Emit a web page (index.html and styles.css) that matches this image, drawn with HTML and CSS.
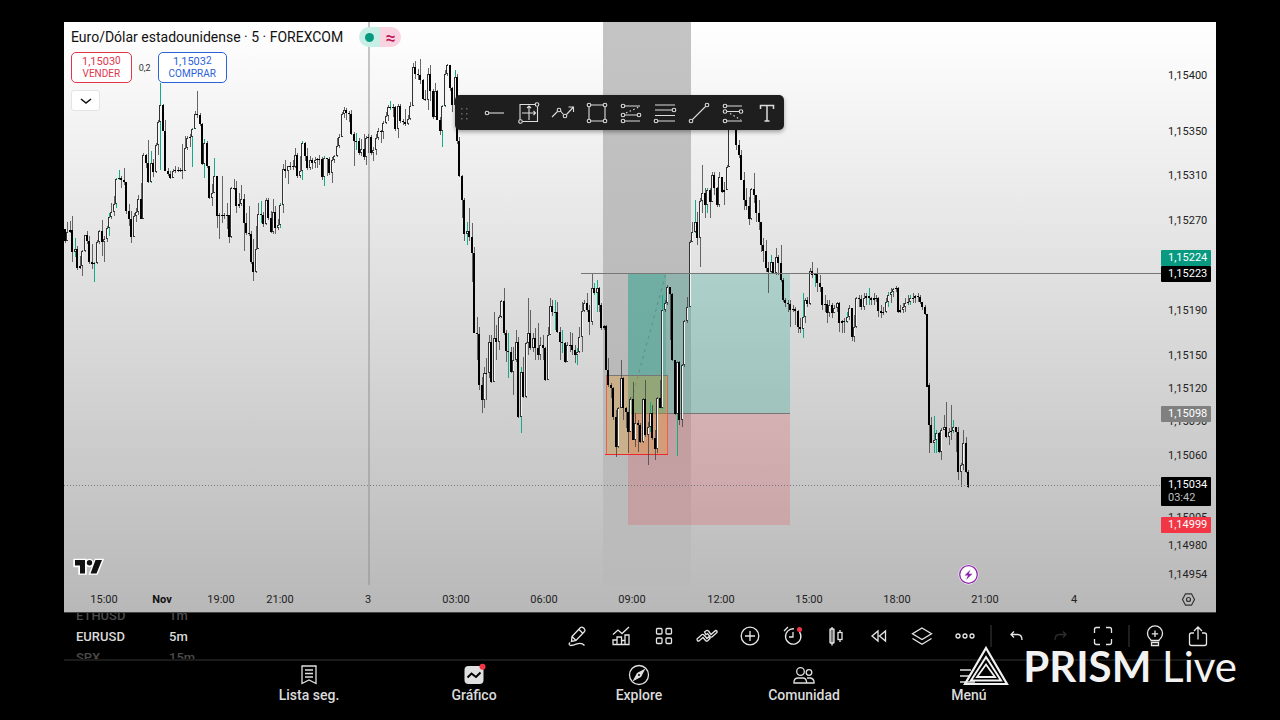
FILE: index.html
```html
<!DOCTYPE html>
<html lang="es">
<head>
    <meta charset="UTF-8">
    <meta name="viewport" content="width=device-width, initial-scale=1.0">
    <title>EURUSD 5m - Gráfico</title>
    <link rel="stylesheet" href="styles.css">
</head>
<body>
    <div class="app">
        <main class="chart">
            <svg class="chart-canvas" viewBox="64 22 1152 590" role="img" aria-label="Euro/Dólar estadounidense, 5 minutos">
                <defs>
                    <linearGradient id="session-fill" x1="0" y1="0" x2="0" y2="1">
                        <stop offset="0" stop-color="#b0b0b0" stop-opacity=".75"/>
                        <stop offset=".7" stop-color="#b0b0b0" stop-opacity=".75"/>
                        <stop offset="1" stop-color="#b4b4b4" stop-opacity=".3"/>
                    </linearGradient>
                </defs>

                <!-- session band and day separator -->
                <rect x="603" y="22" width="88" height="563" fill="url(#session-fill)"/>
                <rect class="day-line" x="368" y="22" width="2" height="563"/>

                <!-- long position -->
                <rect class="profit" x="628" y="273" width="162" height="140"/>
                <rect class="profit-done" x="628" y="273" width="38" height="140"/>
                <rect class="loss" x="628" y="413" width="162" height="112"/>
                <path class="thin-line" d="M628 413.500H790"/>
                <path class="trail" d="M628 413L666 273"/>

                <!-- range box -->
                <rect class="range" x="606" y="376" width="62" height="79"/>
                <path class="range-side" d="M606.500 376V455M667.500 376V455"/>
                <path class="range-top" d="M606 375.500H668"/>
                <path class="range-bottom" d="M605 454.500H668"/>

                <g id="candles"></g>

                <path class="thin-line" d="M581 273.500H1161"/>
                <path class="last-line" d="M64 485.500H1161"/>

                <g id="prices" class="axis"></g>
                <g id="times" class="axis times"></g>

                <g class="tags">
                    <rect x="1161" y="250" width="50" height="16" rx="1" fill="#089981"/>
                    <text x="1168" y="261">1,15224</text>
                    <rect x="1161" y="266" width="50" height="16" rx="1" fill="#000"/>
                    <text x="1168" y="277">1,15223</text>
                    <rect x="1161" y="406" width="50" height="16" rx="1" fill="#808080"/>
                    <text x="1168" y="417">1,15098</text>
                    <rect x="1161" y="477" width="50" height="29" rx="1" fill="#000"/>
                    <text x="1168" y="488">1,15034</text>
                    <text x="1168" y="501" fill-opacity=".75">03:42</text>
                    <rect x="1161" y="517" width="50" height="16" rx="1" fill="#f23645"/>
                    <text x="1168" y="528">1,14999</text>
                </g>

                <!-- event marker -->
                <circle cx="968.500" cy="574.500" r="10" fill="#fff"/>
                <circle cx="968.500" cy="574.500" r="8.800" fill="#fff" stroke="#8e24aa" stroke-width="1.300"/>
                <path d="M970.500 569.500L964.500 575.500H968L966 580L972.500 573.800H968.800Z" fill="#8e24aa"/>

                <!-- axis settings -->
                <path d="M1185.500 593.800H1191.500L1194.500 599.500L1191.500 605.200H1185.500L1182.500 599.500Z" fill="none" stroke="#333" stroke-width="1.200"/>
                <circle cx="1188.500" cy="599.500" r="2" fill="none" stroke="#333" stroke-width="1.200"/>

                <!-- logo -->
                <g stroke="#fff" stroke-width="3.500" stroke-linejoin="miter" fill="#fff">
                    <path d="M75 560.500H85V573H80V565.500H75ZM91 573H96.500L101.500 560.500H96Z"/>
                    <circle cx="89.500" cy="563" r="2.600"/>
                </g>
                <path d="M75 560H85V573.500H80V565.500H75ZM90.500 573.500H96.500L102 560H95.500Z" fill="#111"/>
                <circle cx="89.500" cy="562.800" r="2.700" fill="#111"/>
            </svg>

            <div class="legend">
                <div class="legend-row">
                    <h1>Euro/Dólar estadounidense · 5 · FOREXCOM</h1>
                    <span class="status"><i class="status-open"></i><i class="status-delay">≈</i></span>
                </div>
                <div class="trade-row">
                    <button class="trade sell"><span>1,1503<sup>0</sup></span><small>VENDER</small></button>
                    <span class="spread">0,2</span>
                    <button class="trade buy"><span>1,1503<sup>2</sup></span><small>COMPRAR</small></button>
                </div>
                <button class="collapse" aria-label="Ocultar">
                    <svg width="12" height="8" viewBox="0 0 12 8"><path d="M1 2L6 6L11 2" stroke="#111" stroke-width="1.600" fill="none"/></svg>
                </button>
            </div>

            <div class="drawing-bar">
                <span class="grip"><svg width="10" height="14" viewBox="0 0 10 14" fill="#666"><path d="M1 1h1.500v1.500H1zM6 1h1.500v1.500H6zM1 6h1.500v1.500H1zM6 6h1.500v1.500H6zM1 11h1.500v1.500H1zM6 11h1.500v1.500H6z"/></svg></span>
                <button aria-label="Rayo horizontal"><svg viewBox="0 0 24 24"><circle cx="4" cy="12" r="1.800"/><path d="M6 12H21"/></svg></button>
                <button aria-label="Rango"><svg viewBox="0 0 24 24"><path d="M3 18.500V3.500H18.500M20.500 5.500V20.500H5.500M12 5V19M5 12H18.500M10 7L12 5L14 7M16.500 10L18.500 12L16.500 14M3 3.500V19"/><circle cx="20" cy="3.500" r="1.800"/><circle cx="3.500" cy="20.500" r="1.800"/></svg></button>
                <button aria-label="Trayectoria"><svg viewBox="0 0 24 24"><path d="M1 16L6.500 10.500M9.500 10L12.500 13.500M15.500 13.500L22.500 6M17.500 6H22.500V11"/><circle cx="8" cy="9" r="1.800"/><circle cx="14" cy="15" r="1.800"/></svg></button>
                <button aria-label="Rectángulo"><svg viewBox="0 0 24 24"><path d="M6 4H18M6 20H18M4 6V18M20 6V18"/><circle cx="4" cy="4" r="1.800"/><circle cx="20" cy="4" r="1.800"/><circle cx="4" cy="20" r="1.800"/><circle cx="20" cy="20" r="1.800"/></svg></button>
                <button aria-label="Posición larga"><svg viewBox="0 0 24 24"><path d="M6 5H21M6 14H18M6 20H21"/><path d="M7 12L20 6" stroke-dasharray="1.500 2.500"/><circle cx="4" cy="5" r="1.800"/><circle cx="4" cy="14" r="1.800"/><circle cx="20" cy="14" r="1.800"/><circle cx="4" cy="20" r="1.800"/></svg></button>
                <button aria-label="Retroceso"><svg viewBox="0 0 24 24"><path d="M2 4H22M2 9H19M2 14.500H22M5 20H22"/><circle cx="21" cy="9" r="1.800"/><circle cx="3" cy="20" r="1.800"/></svg></button>
                <button aria-label="Línea de tendencia"><svg viewBox="0 0 24 24"><path d="M5.500 18.500L18.500 5.500"/><circle cx="4" cy="20" r="1.800"/><circle cx="20" cy="4" r="1.800"/></svg></button>
                <button aria-label="Posición corta"><svg viewBox="0 0 24 24"><path d="M6 5H21M6 10.500H18M6 20H21"/><path d="M9 12.500L20 19" stroke-dasharray="1.500 2.500"/><circle cx="4" cy="5" r="1.800"/><circle cx="4" cy="10.500" r="1.800"/><circle cx="20" cy="10.500" r="1.800"/><circle cx="4" cy="20" r="1.800"/></svg></button>
                <button aria-label="Texto"><svg viewBox="0 0 24 24"><path d="M5.500 8V4.500H18.500V8M12 4.500V20M9.500 20H14.500" stroke-width="1.500"/></svg></button>
            </div>
        </main>

        <section class="toolbar">
            <div class="wheel symbol-wheel">
                <span>ETHUSD</span>
                <span class="active">EURUSD</span>
                <span>SPX</span>
            </div>
            <div class="wheel">
                <span>1m</span>
                <span class="active">5m</span>
                <span>15m</span>
            </div>
            <div class="tools">
                <button aria-label="Dibujar"><svg viewBox="0 0 24 24"><path d="M6 12.500L14.500 3.500Q16 2.500 17.500 4L18.500 5Q19.500 6.500 18.500 7.500L10 16.500L5.500 17.500ZM13 5.500L16.500 9M6 12.500L10 16.500M4 18.500Q2 20.500 4.500 21.500Q7 21.500 11 19.800Q16 18.500 18.500 21.500"/></svg></button>
                <button aria-label="Indicadores"><svg viewBox="0 0 24 24"><path d="M4 10.500L9 6L13 9.500L20 3"/><path d="M4 20.500V16H8V20.500M8 17V13H12.500V20.500M12.500 16.500H16V20.500M16 20.500V11H20V20.500H3.500"/></svg></button>
                <button aria-label="Diseño"><svg viewBox="0 0 24 24"><rect x="4.500" y="4.500" width="5.500" height="5.500" rx="1"/><rect x="14" y="4.500" width="5.500" height="5.500" rx="1"/><rect x="4.500" y="14" width="5.500" height="5.500" rx="1"/><rect x="14" y="14" width="5.500" height="5.500" rx="1"/></svg></button>
                <button aria-label="Comparar"><svg viewBox="0 0 24 24"><path d="M2 15L7 10.500Q8 10 9 11L12 14.500L13.500 13L15 14.500L12.500 17Q11.500 17.500 10.500 16.500L8 13.500L4 17Q2 17.500 2 15ZM9.500 8L11.500 6.500Q12.500 6 13.500 7L16 10.500L20.500 6.500Q22.500 6.500 22 8.500L17 13Q16 13.500 15 12.500L12.500 9.500L11 10.500Z"/></svg></button>
                <button aria-label="Añadir"><svg viewBox="0 0 24 24"><circle cx="12" cy="12" r="8.800"/><path d="M12 7V17M7 12H17"/></svg></button>
                <button aria-label="Alertas"><svg viewBox="0 0 24 24"><path d="M18.500 8A7.700 7.700 0 1 1 13 4.800M12 8V13H8M3 7L7 3"/><circle class="dot" cx="18.500" cy="5.500" r="2.500"/></svg></button>
                <button aria-label="Velas"><svg viewBox="0 0 24 24"><path d="M8 3V5M8 19V21.500M16 6V8.500M16 15.500V18"/><rect x="6" y="5" width="4" height="14" rx=".5" fill="#777"/><rect x="14" y="8.500" width="4" height="7"/></svg></button>
                <button aria-label="Repetición"><svg viewBox="0 0 24 24"><path d="M11 7V17L5 12ZM18.500 7V17L12.500 12Z"/></svg></button>
                <button aria-label="Objetos"><svg viewBox="0 0 24 24"><path d="M12 4L21.500 9.800L12 15.500L2.500 9.800ZM2.500 14.500L12 20.300L21.500 14.500"/></svg></button>
                <button aria-label="Más"><svg viewBox="0 0 24 24"><circle cx="5" cy="12" r="2"/><circle cx="12" cy="12" r="2"/><circle cx="19" cy="12" r="2"/></svg></button>
                <i class="divider"></i>
                <button aria-label="Deshacer"><svg viewBox="0 0 24 24"><path d="M9 7.500L6 10.500L9 13.500M6.500 10.500H12.500Q17 10.500 17 16"/></svg></button>
                <button class="off" aria-label="Rehacer" disabled><svg viewBox="0 0 24 24"><path d="M15 7.500L18 10.500L15 13.500M17.500 10.500H11.500Q7 10.500 7 16"/></svg></button>
                <button aria-label="Pantalla completa"><svg viewBox="0 0 24 24"><path d="M3.500 9V5.500Q3.500 3.500 5.500 3.500H9M15 3.500H18.500Q20.500 3.500 20.500 5.500V9M20.500 15V18.500Q20.500 20.500 18.500 20.500H15M9 20.500H5.500Q3.500 20.500 3.500 18.500V15"/></svg></button>
                <i class="divider"></i>
                <button aria-label="Publicar idea"><svg viewBox="0 0 24 24"><path d="M8 16.500Q8 15.500 6.500 14.500A7.500 7.500 0 1 1 17.500 14.500Q16 15.500 16 16.500ZM8.500 18.500H15.500V21.500H8.500ZM12 6.500V13M8.800 9.800H15.200"/></svg></button>
                <button aria-label="Compartir"><svg viewBox="0 0 24 24"><path d="M8 9H5.500Q3.500 9 3.500 11V19.500Q3.500 21.500 5.500 21.500H18.500Q20.500 21.500 20.500 19.500V11Q20.500 9 18.500 9H16M12 15.500V3.500M8 7L12 3L16 7"/></svg></button>
            </div>
        </section>

        <nav class="nav">
            <a href="#lista">
                <svg viewBox="0 0 24 24"><path d="M5 3H19V20.500L12 17L5 20.500ZM8 7H16M8 10.500H16M8 14H16"/></svg>
                Lista seg.
            </a>
            <a href="#grafico" class="current">
                <svg viewBox="0 0 24 24"><rect x="2.500" y="3" width="19" height="18" rx="4" fill="#e0e0e0" stroke="none"/><path d="M5.500 14.500L9.500 10.500L14 14L18.500 9.500" stroke="#000" stroke-width="2"/><circle class="dot" cx="20.500" cy="3.800" r="3"/></svg>
                Gráfico
            </a>
            <a href="#explore">
                <svg viewBox="0 0 24 24"><circle cx="12" cy="12" r="9.500"/><path d="M17 7L13.500 13.500L7 17L10.500 10.500Z" fill="#e0e0e0"/><circle cx="12" cy="12" r="1" fill="#000" stroke="none"/></svg>
                Explore
            </a>
            <a href="#comunidad">
                <svg viewBox="0 0 24 24"><circle cx="8.500" cy="8.500" r="3.800"/><circle cx="17" cy="9.500" r="2.800"/><path d="M2 20V18.500Q2.500 15 6 15H11Q14 15 14.500 18.500V20ZM15 15H18.500Q21.500 15.500 22 18.500V20H14.500"/></svg>
                Comunidad
            </a>
            <a href="#menu">
                <svg viewBox="0 0 24 24"><path d="M3 7H14M3 13H12M3 19H18"/></svg>
                Menú
            </a>
        </nav>
    </div>

    <div class="watermark">
        <svg width="46" height="40" viewBox="0 0 46 40" fill="none" stroke="#f2f2f2">
            <path d="M23 2L44 38H2Z" stroke-width="2.200"/>
            <path d="M23 11L38 34.500H8Z" stroke-width="2"/>
            <path d="M23 18.500L32 31H14Z" stroke-width="1.800"/>
        </svg>
        <span><b>PRISM</b> Live</span>
    </div>

    <script src="chart.js"></script>
</body>
</html>
```
FILE: styles.css
```css
* {
    box-sizing: border-box;
}
body {
    margin: 0;
    padding: 22px 5% 0;
    background: #000;
    color: #dbdbdb;
    font-family: Roboto, 'Liberation Sans', sans-serif;
}
button {
    font-family: inherit;
    padding: 0;
    border: 0;
    background: none;
    cursor: pointer;
}

/* chart */
.chart {
    position: relative;
    background: linear-gradient(#ffffff, #b8b8b8);
}
.chart-canvas {
    display: block;
    width: 100%;
}
.day-line {
    fill: #909090;
    fill-opacity: 0.5;
}
#candles {
    shape-rendering: crispEdges;
}
.wick {
    stroke: #444;
    stroke-opacity: 0.8;
    fill: none;
}
.wick-green {
    stroke: #12ad88;
    fill: none;
}
.body-down {
    fill: #000;
}
.body-up {
    fill: #f4f4f4;
}
.body-edge {
    fill: #333;
}
.profit {
    fill: #089981;
    fill-opacity: 0.24;
}
.profit-done {
    fill: #089981;
    fill-opacity: 0.24;
}
.loss {
    fill: #f23645;
    fill-opacity: 0.2;
}
.thin-line {
    stroke: #777;
}
.trail {
    stroke: #555;
    stroke-opacity: 0.5;
    stroke-dasharray: 3 4;
    stroke-width: 0.8;
}
.range {
    fill: #ff9800;
    fill-opacity: 0.25;
}
.range-side {
    stroke: #f44336;
    stroke-opacity: 0.7;
}
.range-top {
    stroke: #777;
}
.range-bottom {
    stroke: #f0282d;
}
.last-line {
    stroke: #777;
    stroke-dasharray: 1 2;
}
.axis {
    fill: #222;
    font-size: 11px;
}
.times {
    text-anchor: middle;
}
.times .month {
    font-weight: bold;
    fill: #111;
}
.tags {
    fill: #fff;
    font-size: 11px;
}

/* legend over the chart */
.legend {
    position: absolute;
    top: 5px;
    left: 7px;
}
.legend-row {
    display: flex;
    align-items: center;
    gap: 16px;
    height: 20px;
}
.legend h1 {
    margin: 0;
    font-size: 14px;
    font-weight: 400;
    color: #111;
}
.status {
    display: flex;
    height: 20px;
    border-radius: 10px;
    overflow: hidden;
}
.status i {
    display: flex;
    align-items: center;
    justify-content: center;
    width: 21px;
    font-style: normal;
}
.status-open {
    background: #c8efe6;
}
.status-open::before {
    content: "";
    width: 9px;
    height: 9px;
    border-radius: 50%;
    background: #089981;
}
.status-delay {
    background: #f9d3df;
    color: #c2185b;
    font-size: 18px;
    font-weight: 500;
}
.trade-row {
    display: flex;
    align-items: center;
    gap: 7px;
    margin: 5px 0 7px;
}
.trade {
    display: flex;
    flex-direction: column;
    align-items: center;
    justify-content: center;
    height: 31px;
    padding: 0 10px;
    border: 1px solid;
    border-radius: 5px;
    background: #fff;
    font-size: 11px;
    line-height: 12px;
}
.trade sup {
    font-size: 10px;
    line-height: 0;
    vertical-align: 1px;
}
.trade small {
    font-size: 10px;
}
.sell {
    color: #e0364c;
}
.buy {
    color: #2a62d8;
}
.spread {
    font-size: 9px;
    color: #333;
}
.collapse {
    display: flex;
    align-items: center;
    justify-content: center;
    width: 29px;
    height: 21px;
    border: 1px solid #e4e4e4;
    border-radius: 3px;
    background: #fff;
}

/* floating drawing tools */
.drawing-bar {
    position: absolute;
    top: 73px;
    left: 391px;
    display: flex;
    align-items: center;
    height: 35px;
    padding-left: 5px;
    border-radius: 5px;
    background: #1e1e1e;
    box-shadow: 0 2px 4px rgba(0,0,0,0.35);
}
.grip {
    width: 18px;
    height: 14px;
}
.drawing-bar button {
    width: 34px;
    height: 35px;
}
.drawing-bar button svg {
    display: block;
    width: 24px;
    height: 24px;
    margin: 0 auto;
    fill: none;
    stroke: #dcdcdc;
    stroke-width: 1.1;
}

/* symbol wheel and tools */
.toolbar {
    display: flex;
    height: 49px;
    padding-left: 12px;
    border-top: 1px solid #444;
    border-bottom: 2px solid #1a1a1a;
}
.wheel {
    display: flex;
    flex-direction: column;
    justify-content: center;
    overflow: hidden;
    font-size: 13px;
    font-weight: 500;
    line-height: 21px;
    color: #4a4a4a;
}
.symbol-wheel {
    width: 93px;
}
.wheel .active {
    color: #dbdbdb;
}
.tools {
    display: flex;
    align-items: center;
    gap: 7px;
    margin-left: auto;
}
.tools button {
    width: 36px;
    height: 40px;
}
.tools svg {
    display: block;
    width: 24px;
    height: 24px;
    margin: 0 auto;
    fill: none;
    stroke: #e6e6e6;
    stroke-width: 1.3;
}
.tools .off {
    opacity: 0.2;
}
.divider {
    width: 2px;
    height: 22px;
    background: #1e1e1e;
}
.tools .dot,
.nav .dot {
    fill: #f23645;
    stroke: none;
}

/* bottom navigation */
.nav {
    display: flex;
    justify-content: center;
    padding: 2px 2px 0 0;
}
.nav a {
    display: flex;
    flex-direction: column;
    align-items: center;
    flex: 0 0 165px;
    color: #dbdbdb;
    font-size: 14px;
    font-weight: 500;
    line-height: 16px;
    text-decoration: none;
}
.nav svg {
    width: 24px;
    height: 24px;
    fill: none;
    stroke: #e0e0e0;
    stroke-width: 1.3;
}

/* stream watermark */
.watermark {
    position: absolute;
    right: 43px;
    bottom: 26px;
    display: flex;
    align-items: center;
    gap: 14px;
    color: #f2f2f2;
    font-family: Lato, sans-serif;
    font-size: 42px;
    line-height: 56px;
}
```
FILE: chart.js
```javascript
const SVG = 'http://www.w3.org/2000/svg';
const STEP = 2.447;

// each bar is [high, low, close, green wick?], opening at the previous close
const segments = [
    { x: 65, open: 229, bars: [
        [229,243,241],[222,240,232],[221,233,230],[216,262,252],[238,257,249,1],[246,270,268],[256,269,266],[250,276,251],
        [235,252,235],[231,244,241],[236,264,262],[244,269,264],[262,282,263,1],[240,264,242],[230,244,231],[220,256,242],
        [236,262,239],[226,242,228],[213,236,217,1],[203,219,212],[196,216,204],[178,208,179,1],[170,180,178,1],[176,188,180],
        [168,185,182],[182,214,211],[204,226,219],[211,243,237],[213,234,216],[208,222,212],[195,215,199],[183,219,219],
        [153,219,155],[154,168,163],[140,183,182],[151,183,163,1],[159,177,172],[143,173,145],[120,155,122],[83,170,105,1],
        [104,130,131],[120,170,171],[168,176,174],[171,179,178],[169,178,171],[166,173,170],[167,172,170],[168,172,170],
        [144,179,171],[136,171,148],[136,150,138],[134,147,137],[128,167,129,1],[111,129,114],[91,118,115],[113,126,124],
        [123,165,164],[139,178,143,1],[141,168,166],[168,199,198],[184,206,193],[158,193,176,1],[176,228,216],[213,239,215],
        [176,223,215],[213,219,215],[203,229,215],[215,243,237],[187,238,188],[179,190,188],[181,213,206],[193,208,204],
        [185,206,199],[194,251,223],[213,235,233],[206,236,234],[231,264,262],[239,281,272],[226,273,249],[203,249,214],
        [201,223,215,1],[212,227,224],[198,225,200],[198,220,218],[211,233,232],[199,234,212],[206,234,228],[219,230,225],
        [203,228,205,1],[164,213,169],[160,178,171],[166,184,166],[162,170,166],[160,170,167],[148,168,155],[153,178,176],
        [156,178,171],[141,180,143,1],[142,161,156],[148,170,168],[156,170,160],[158,169,163],[157,168,160],[158,168,159],
        [155,165,159],[157,180,177],[156,186,158,1],[158,176,159],[157,175,173],[157,183,160],[155,163,156],[138,157,146],
        [134,148,137],[112,137,114],[107,118,110],[108,120,113],[111,122,114],[110,135,134],[132,166,141],[133,150,141,1],
        [138,155,153],[139,156,149],[134,160,157],[136,165,138],[134,153,137],[135,155,153],[147,161,150],[134,155,138],
        [128,140,131],[130,143,132],[121,139,123],[112,124,116],[105,121,107],[101,110,107,1],[104,117,107],[106,131,129],
        [104,138,106],[104,123,121],[119,125,122],[109,126,124],[115,125,119],[102,120,106]
    ]},
    { x: 413, open: 106, bars: [
        [63,106,67],[61,79,74],[69,80,75],[59,84,80],[79,100,99],[90,101,100],[68,110,74],[65,101,91],
        [89,119,117],[83,103,91],[90,120,120],[117,135,131],[105,147,106,1],[70,107,74],[64,76,65],[65,91,88],
        [87,112,105],[70,118,77,1],[74,144,141],[137,177,176],[175,218,200],[198,241,234],[222,245,231,1],[208,241,237],
        [223,282,253],[247,333,333],[317,360,334],[327,390,385],[377,413,400],[367,408,373],[358,400,373],[335,378,342],
        [335,383,382],[312,377,338],[325,360,342],[315,350,317],[300,318,301],[288,335,333],[330,362,351],[333,378,352,1],
        [347,373,372],[347,395,360],[330,362,342],[337,418,417],[367,433,372,1],[357,398,397],[342,398,343],[298,355,333],
        [310,350,348],[333,352,338],[328,360,348],[323,360,355],[337,360,345],[335,360,348],[347,381,380],[327,380,335],
        [298,335,306],[300,316,312],[300,330,312,1],[302,333,332],[327,360,342],[330,353,343,1],[342,363,362],[342,362,345],
        [332,352,345],[333,355,350],[345,363,355],[348,365,352,1],[327,353,337],[302,352,311],[300,312,303],[293,312,310],
        [305,335,322],[273,325,288],[283,295,293,1],[280,312,288,1],[287,312,305],[303,330,328],[325,330,326]
    ]},
    { x: 606, open: 326, bars: [
        [325,370,370],[358,387,385],[383,398,388],[387,420,417],[410,457,447],[407,448,408],[360,408,378],[377,420,408],
        [407,428,412],[412,453,432],[397,432,399],[382,440,440],[413,447,423],[420,452,425],[423,443,442],[398,443,399],
        [380,437,435],[422,465,427],[402,432,413,1],[405,440,438],[430,460,449],[397,453,398],[380,408,408],[295,409,310,1],
        [300,312,303],[285,305,287],[287,340,294],[293,361,360],[361,415,414],[361,456,362,1],[361,425,420],[364,427,365],
        [320,367,321],[297,323,307]
    ]},
    { x: 690, open: 307, bars: [
        [240,307,242],[222,242,232],[200,233,222,1],[212,245,238],[198,267,201],[165,213,193],[188,218,205],[188,213,190,1],
        [188,218,202],[172,202,175],[172,195,188],[187,207,205],[172,207,177],[177,193,192],[182,205,190],[165,190,167],
        [122,167,124],[110,130,118],[112,130,125],[126,150,145],[140,158,155],[150,180,180],[172,210,200],[188,210,206],
        [197,225,219],[188,220,189],[173,203,195],[195,222,213],[200,230,222],[222,252,245],[238,262,251],[240,272,268],
        [262,293,272],[255,273,262,1],[262,274,273],[248,275,257],[255,275,263],[245,282,280],[278,302,300],[298,307,303],
        [300,312,304],[300,327,310],[305,312,309],[307,325,311],[310,333,327],[318,333,329],[293,338,317,1],[298,323,300],
        [297,307,304],[268,305,271],[262,278,275],[273,287,274,1],[268,292,283],[275,292,287],[287,310,305],[295,312,304],
        [300,323,313],[300,317,305],[303,318,313],[305,313,308],[302,312,303],[302,332,323],[320,333,321],[318,333,322],
        [312,323,317,1],[305,320,308],[308,341,337],[315,342,327],[297,328,298],[295,307,299],[295,310,307],[293,310,298],
        [293,305,296],[288,305,298,1],[297,305,300],[293,305,298],[295,302,298],[297,317,311],[305,318,313],[307,315,312],
        [298,313,302],[292,307,295,1],[288,303,292],[288,297,289],[286,292,288],[287,313,312],[305,313,310],[303,313,307],
        [298,312,303],[295,305,302],[295,305,298,1],[293,303,298],[295,303,296],[293,302,297],[295,304,302],[302,310,307],
        [305,315,314],[314,387,387]
    ]},
    { x: 929, open: 385, bars: [
        [383,453,425],[417,443,443],[416,453,440,1],[430,453,433,1],[432,453,452],[428,460,430],[415,430,427],[402,438,437],
        [428,445,432],[405,440,431],[420,433,427,1],[427,452,432],[427,480,472],[463,487,465],[430,470,443],[437,473,472],
        [470,488,487]
    ]}
];

const prices = {
    '1,15400': 75, '1,15350': 131, '1,15310': 175, '1,15270': 220, '1,15190': 310, '1,15150': 355,
    '1,15120': 388, '1,15090': 421, '1,15060': 455, '1,15005': 517, '1,14980': 545, '1,14954': 574
};

const times = [
    ['15:00', 104], ['Nov', 162], ['19:00', 221], ['21:00', 280], ['3', 368], ['03:00', 456], ['06:00', 544],
    ['09:00', 632], ['12:00', 721], ['15:00', 809], ['18:00', 897], ['21:00', 985], ['4', 1074]
];

function add(parent, name, attrs, text) {
    const el = document.createElementNS(SVG, name);
    for (const key in attrs) {
        el.setAttribute(key, attrs[key]);
    }
    if (text) {
        el.textContent = text;
    }
    parent.appendChild(el);
}

const candles = document.getElementById('candles');
segments.forEach(segment => {
    let open = segment.open;
    segment.bars.forEach(([high, low, close, green], i) => {
        const x = Math.round(segment.x + i * STEP);
        const top = Math.min(open, close);
        const height = Math.max(Math.abs(open - close), 1);
        add(candles, 'path', { class: green ? 'wick-green' : 'wick', d: `M${x + 0.5} ${high}V${low}` });
        if (close < open && height > 2) {
            // hollow body: light fill with a dark edge on the left, top and bottom
            add(candles, 'rect', { class: 'body-edge', x: x - 1, y: top, width: 2, height: height });
            add(candles, 'rect', { class: 'body-up', x: x, y: top + 1, width: 1, height: height - 2 });
        } else {
            add(candles, 'rect', { class: 'body-down', x: x - 1, y: top, width: 2, height: height });
        }
        open = close;
    });
});

const priceAxis = document.getElementById('prices');
for (const label in prices) {
    add(priceAxis, 'text', { x: 1168, y: prices[label] + 4 }, label);
}

const timeAxis = document.getElementById('times');
times.forEach(([label, x]) => {
    add(timeAxis, 'text', { x: x, y: 603, class: label === 'Nov' ? 'month' : 'time' }, label);
});
```
